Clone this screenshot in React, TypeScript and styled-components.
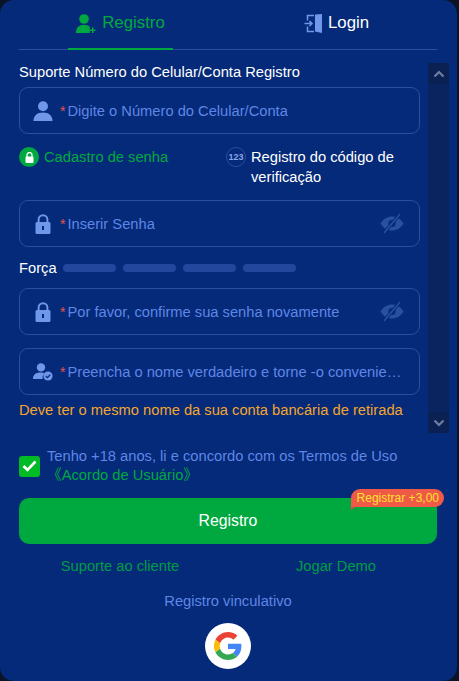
import React from "react";
import styled, { createGlobalStyle } from "styled-components";

const GREEN = "#00a93f";
const BLUE = "#5f86e6";
const ICON = "#6f97ea";

const Global = createGlobalStyle`
  html, body {
    margin: 0;
    padding: 0;
    background: #0b1326;
  }
  * {
    box-sizing: border-box;
  }
`;

const Modal = styled.div`
  width: 457px;
  height: 681px;
  background: #052a79;
  border-radius: 14px;
  font-family: "Liberation Sans", Arial, "Noto Sans CJK SC", sans-serif;
  font-size: 14.7px;
  color: #fff;
  padding: 0 20px 0 19px;
  display: flex;
  flex-direction: column;
`;

const Tabs = styled.div`
  height: 50px;
  flex: none;
  display: flex;
  border-bottom: 1px solid #2a4f9f;
`;

const Tab = styled.div<{ $active?: boolean; $width: number; $left: number }>`
  width: ${(p) => p.$width}px;
  margin-left: ${(p) => p.$left}px;
  height: 50px;
  display: flex;
  align-items: center;
  justify-content: center;
  padding-bottom: 2px;
  gap: 6px;
  font-size: 16.8px;
  color: ${(p) => (p.$active ? GREEN : "#fff")};
  border-bottom: 2px solid ${(p) => (p.$active ? GREEN : "transparent")};
`;

const Body = styled.div`
  display: flex;
  height: 370px;
  margin-top: 13px;
  margin-right: -14px;
  flex: none;
`;

const Form = styled.div`
  width: 401px;
  flex: none;
  display: flex;
  flex-direction: column;
`;

const Scrollbar = styled.div`
  width: 21px;
  flex: none;
  margin-left: 8px;
  background: #0a2460;
  display: flex;
  flex-direction: column;
  justify-content: space-between;
`;

const ScrollButton = styled.div`
  height: 21px;
  background: #0b2154;
  display: flex;
  align-items: center;
  justify-content: center;
`;

const Label = styled.div`
  height: 18px;
  line-height: 18px;
  margin-bottom: 6px;
  white-space: nowrap;
`;

const Field = styled.div<{ $mt?: number }>`
  height: 47px;
  flex: none;
  margin-top: ${(p) => p.$mt ?? 0}px;
  border: 1px solid #2a4f9f;
  border-radius: 9px;
  display: flex;
  align-items: center;
  padding: 0 15px 0 0;
`;

const FieldIcon = styled.div`
  width: 40px;
  flex: none;
  display: flex;
  justify-content: center;
  padding-left: 6px;
`;

const Star = styled.span`
  color: #e5544b;
  margin-right: 2px;
  flex: none;
  font-size: 14px;
`;

const Placeholder = styled.span`
  color: ${BLUE};
  flex: 1;
  min-width: 0;
  white-space: nowrap;
  overflow: hidden;
  text-overflow: ellipsis;
`;

const ModeRow = styled.div`
  display: flex;
  margin-top: 13px;
  height: 53px;
  flex: none;
`;

const Mode = styled.div<{ $active?: boolean; $width: number }>`
  width: ${(p) => p.$width}px;
  display: flex;
  gap: 5px;
  line-height: 20px;
  color: ${(p) => (p.$active ? GREEN : "#fff")};
`;

const ModeBadge = styled.div<{ $active?: boolean }>`
  width: 20px;
  height: 20px;
  flex: none;
  border-radius: 50%;
  display: flex;
  align-items: center;
  justify-content: center;
  font-size: 9px;
  font-weight: 700;
  letter-spacing: 0;
  color: #8aa6e8;
  background: ${(p) => (p.$active ? GREEN : "transparent")};
  border: ${(p) => (p.$active ? "none" : "1px solid #2a4f9f")};
`;

const StrengthRow = styled.div`
  display: flex;
  align-items: center;
  height: 41px;
  flex: none;
`;

const Bars = styled.div`
  display: flex;
  gap: 7px;
  margin-left: 6px;
`;

const Bar = styled.div`
  width: 53px;
  height: 8px;
  border-radius: 4px;
  background: #22479c;
`;

const Hint = styled.div`
  color: #f2a52f;
  margin-top: 6px;
  line-height: 18px;
  white-space: nowrap;
`;

const Agree = styled.div`
  display: flex;
  align-items: center;
  margin-top: 14px;
  height: 38px;
  flex: none;
`;

const Check = styled.div`
  width: 21px;
  height: 21px;
  flex: none;
  border-radius: 3px;
  background: #00bb25;
  display: flex;
  align-items: center;
  justify-content: center;
`;

const AgreeText = styled.div`
  margin-left: 7px;
  line-height: 19px;
  color: ${BLUE};
  white-space: nowrap;
`;

const AgreeLink = styled.div`
  color: ${GREEN};
`;

const Submit = styled.div`
  position: relative;
  height: 46px;
  flex: none;
  margin-top: 13px;
  border-radius: 10px;
  background: ${GREEN};
  display: flex;
  align-items: center;
  justify-content: center;
  font-size: 15.8px;
`;

const Bonus = styled.div`
  position: absolute;
  top: -9px;
  right: -7px;
  height: 18px;
  padding: 0 5px 0 6px;
  border-radius: 9px 9px 9px 0;
  background: #ee5a46;
  color: #ffe22e;
  font-size: 12px;
  line-height: 18px;
  white-space: nowrap;
  &::after {
    content: "";
    position: absolute;
    left: 0;
    bottom: -3px;
    border-left: 4px solid #d8503f;
    border-bottom: 3px solid transparent;
  }
`;

const Links = styled.div`
  display: flex;
  margin-top: 13px;
  color: ${GREEN};
  line-height: 18px;
  opacity: 0.9;
  white-space: nowrap;
`;

const LinkCell = styled.div<{ $width: number; $left: number }>`
  width: ${(p) => p.$width}px;
  margin-left: ${(p) => p.$left}px;
  text-align: center;
`;

const Bind = styled.div`
  margin-top: 17px;
  text-align: center;
  color: ${BLUE};
  line-height: 18px;
`;

const GoogleButton = styled.div`
  width: 46px;
  height: 46px;
  border-radius: 50%;
  background: #fff;
  margin: 13px auto 0;
  display: flex;
  align-items: center;
  justify-content: center;
`;

const UserIcon = () => (
  <svg width="20" height="20" viewBox="0 0 20 20" fill={ICON}>
    <circle cx="10" cy="5.2" r="5" />
    <path d="M0.5 20c0-5.6 3.6-8.6 9.5-8.6s9.5 3 9.5 8.6z" />
  </svg>
);

const LockIcon = () => (
  <svg width="16" height="20" viewBox="0 0 16 20">
    <path
      d="M3.6 9V5.6a4.4 4.4 0 0 1 8.8 0V9"
      fill="none"
      stroke={ICON}
      strokeWidth="2"
    />
    <rect x="0.5" y="8" width="15" height="12" rx="1.5" fill={ICON} />
    <rect x="7" y="12" width="2" height="4" fill="#052a79" />
  </svg>
);

const IdIcon = () => (
  <svg width="20" height="18" viewBox="0 0 20 18">
    <circle cx="8" cy="4.4" r="4.2" fill={ICON} />
    <path d="M0 16c0-4.4 3-6.4 7.4-6.4 2 0 3.2.4 4 .9-1.6 1.4-2.2 3.2-1.6 5.5z" fill={ICON} />
    <circle cx="15" cy="13" r="4.6" fill={ICON} />
    <path d="M12.8 13l1.6 1.6 2.8-2.8" fill="none" stroke="#052a79" strokeWidth="1.3" />
  </svg>
);

const EyeOff = () => (
  <svg width="24" height="21" viewBox="0 0 24 21">
    <path d="M0.5 10.5C3.5 5.5 7.5 3.5 12 3.5s8.5 2 11.5 7c-3 5-7 7-11.5 7s-8.500-2-11.500-7z" fill="#27509f" />
    <circle cx="12" cy="10.5" r="3.6" fill="#052a79" />
    <path d="M4 20L20 1" stroke="#052a79" strokeWidth="3.4" />
    <path d="M4 20L20 1" stroke="#27509f" strokeWidth="1.6" />
  </svg>
);

const GoogleIcon = () => (
  <svg width="28" height="28" viewBox="0 0 48 48">
    <path fill="#EA4335" d="M24 9.5c3.54 0 6.71 1.22 9.21 3.6l6.85-6.85C35.9 2.38 30.47 0 24 0 14.62 0 6.51 5.38 2.56 13.22l7.98 6.19C12.43 13.72 17.74 9.5 24 9.5z" />
    <path fill="#4285F4" d="M46.98 24.55c0-1.57-.15-3.09-.38-4.55H24v9.02h12.94c-.58 2.96-2.26 5.48-4.78 7.18l7.73 6c4.51-4.18 7.09-10.36 7.09-17.65z" />
    <path fill="#FBBC05" d="M10.53 28.59c-.48-1.45-.76-2.99-.76-4.59s.27-3.14.76-4.59l-7.98-6.19C.92 16.46 0 20.12 0 24c0 3.88.92 7.54 2.56 10.78l7.97-6.19z" />
    <path fill="#34A853" d="M24 48c6.48 0 11.93-2.13 15.89-5.81l-7.73-6c-2.15 1.45-4.92 2.3-8.16 2.3-6.26 0-11.57-4.22-13.47-9.91l-7.98 6.19C6.51 42.62 14.62 48 24 48z" />
  </svg>
);

const Chevron = ({ down }: { down?: boolean }) => (
  <svg width="12" height="8" viewBox="0 0 12 8">
    <path
      d={down ? "M1.500 1.500L6 6l4.500-4.500" : "M1.500 6.500L6 2l4.500 4.500"}
      fill="none"
      stroke="#6f7f9f"
      strokeWidth="2.200"
    />
  </svg>
);

const App = () => {
  return (
    <>
      <Global />
      <Modal>
        <Tabs>
          <Tab $active $width={105} $left={49}>
            <svg width="20" height="19" viewBox="0 0 20 19" fill={GREEN}>
              <circle cx="8" cy="5" r="4.800" />
              <path d="M0 19c0-5.500 3-8.200 8-8.200 2.600 0 4.500.7 5.800 2V19z" />
              <path d="M16 13.500h1.400v2h2v1.400h-2v2H16v-2h-2v-1.400h2z" />
            </svg>
            Registro
          </Tab>
          <Tab $width={105} $left={111}>
            <svg width="18" height="19" viewBox="0 0 18 19">
              <path d="M11 0.500l7-.5v19l-7-1.500z" fill={ICON} />
              <path
                d="M10 1.500H3.500v5M3.500 12.500v5H10M0.500 9.500H8M5.500 7l2.500 2.500L5.500 12"
                fill="none"
                stroke={ICON}
                strokeWidth="1.500"
              />
            </svg>
            Login
          </Tab>
        </Tabs>
        <Body>
          <Form>
            <Label>Suporte Número do Celular/Conta Registro</Label>
            <Field>
              <FieldIcon>
                <UserIcon />
              </FieldIcon>
              <Star>*</Star>
              <Placeholder>Digite o Número do Celular/Conta</Placeholder>
            </Field>
            <ModeRow>
              <Mode $active $width={207}>
                <ModeBadge $active>
                  <svg width="9" height="11" viewBox="0 0 9 11">
                    <path d="M2 5V3a2.500 2.500 0 0 1 5 0v2" fill="none" stroke="#fff" strokeWidth="1.300" />
                    <rect x="0.500" y="4.500" width="8" height="6.500" rx="1" fill="#fff" />
                  </svg>
                </ModeBadge>
                Cadastro de senha
              </Mode>
              <Mode $width={194}>
                <ModeBadge>123</ModeBadge>
                <span>
                  Registro do código de
                  <br />
                  verificação
                </span>
              </Mode>
            </ModeRow>
            <Field $mt={0}>
              <FieldIcon>
                <LockIcon />
              </FieldIcon>
              <Star>*</Star>
              <Placeholder>Inserir Senha</Placeholder>
              <EyeOff />
            </Field>
            <StrengthRow>
              Força
              <Bars>
                <Bar />
                <Bar />
                <Bar />
                <Bar />
              </Bars>
            </StrengthRow>
            <Field>
              <FieldIcon>
                <LockIcon />
              </FieldIcon>
              <Star>*</Star>
              <Placeholder>Por favor, confirme sua senha novamente</Placeholder>
              <EyeOff />
            </Field>
            <Field $mt={13}>
              <FieldIcon>
                <IdIcon />
              </FieldIcon>
              <Star>*</Star>
              <Placeholder>Preencha o nome verdadeiro e torne -o conveniente</Placeholder>
            </Field>
            <Hint>Deve ter o mesmo nome da sua conta bancária de retirada</Hint>
          </Form>
          <Scrollbar>
            <ScrollButton>
              <Chevron />
            </ScrollButton>
            <ScrollButton>
              <Chevron down />
            </ScrollButton>
          </Scrollbar>
        </Body>
        <Agree>
          <Check>
            <svg width="15" height="12" viewBox="0 0 15 12">
              <path d="M1.500 6l4 4 8-8.500" fill="none" stroke="#fff" strokeWidth="2.600" />
            </svg>
          </Check>
          <AgreeText>
            Tenho +18 anos, li e concordo com os Termos de Uso
            <AgreeLink>《Acordo de Usuário》</AgreeLink>
          </AgreeText>
        </Agree>
        <Submit>
          Registro
          <Bonus>Registrar +3,00</Bonus>
        </Submit>
        <Links>
          <LinkCell $width={120} $left={41}>
            Suporte ao cliente
          </LinkCell>
          <LinkCell $width={100} $left={106}>
            Jogar Demo
          </LinkCell>
        </Links>
        <Bind>Registro vinculativo</Bind>
        <GoogleButton>
          <GoogleIcon />
        </GoogleButton>
      </Modal>
    </>
  );
};

export default App;
